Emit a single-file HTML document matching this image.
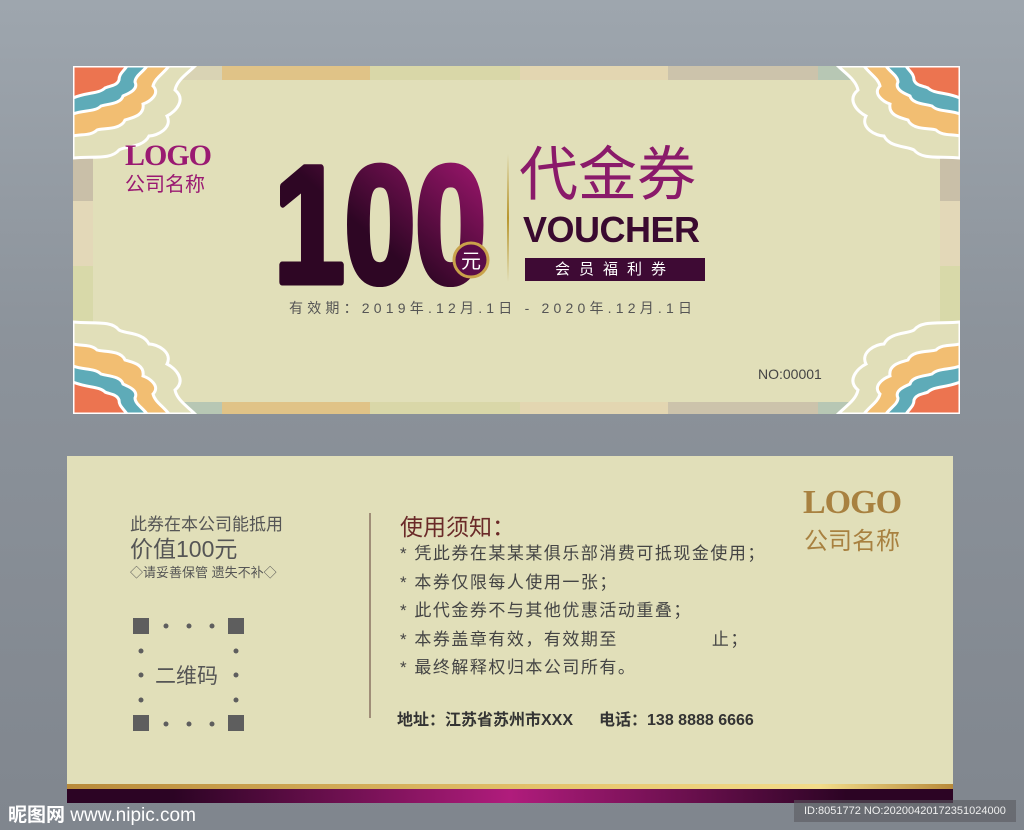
<!DOCTYPE html>
<html><head><meta charset="utf-8"><style>
*{margin:0;padding:0;box-sizing:border-box}
body{width:1024px;height:830px;overflow:hidden;position:relative;font-family:"Liberation Sans","Noto Sans CJK SC",sans-serif;
background:linear-gradient(180deg,#9ea6ae 0%,#8c939b 40%,#80868e 100%)}
.card{position:absolute;background:#e1dfb9}
.abs{position:absolute}
.cn{font-family:"Liberation Sans","Noto Sans CJK SC",sans-serif}
</style></head><body>
<svg width="0" height="0" style="position:absolute"><defs>
<g id="corner">
<path d="M0,0 H122 C114,8 104,14 102,24 C114,34 102,46 94,50 C100,62 84,70 76,70 C70,82 52,80 46,84 C38,94 20,90 0,92 Z" fill="#e1dfb9" stroke="#fff" stroke-width="3"/>
<path d="M0,0 H96 C90,8 82,12 80,20 C88,28 76,36 70,38 C72,50 58,52 52,54 C48,64 30,62 24,64 C18,70 8,68 0,70 Z" fill="#f2be72" stroke="#fff" stroke-width="3"/>
<path d="M0,0 H74 C70,6 62,10 62,16 C66,24 54,28 50,30 C48,38 34,38 28,40 C22,46 10,44 0,48 Z" fill="#5eabb8" stroke="#fff" stroke-width="3"/>
<path d="M0,0 H54 C50,6 46,8 46,14 C44,20 36,20 32,22 C26,28 14,26 0,32 Z" fill="#ec7450" stroke="#fff" stroke-width="3"/>
</g>
<linearGradient id="g100" x1="0" y1="1" x2="1" y2="0"><stop offset="0.45" stop-color="#2e0624"/><stop offset="1" stop-color="#b0197a"/></linearGradient>
</defs></svg>

<!-- top card -->
<div class="card" style="left:73px;top:66px;width:887px;height:348px">
 <div class="abs" style="left:0;top:0;width:887px;height:14px;background:linear-gradient(90deg,#d9d3b4 0,#d9d3b4 149px,#e0c387 149px,#e0c387 297px,#d9d7a8 297px,#d9d7a8 447px,#e3d6b1 447px,#e3d6b1 595px,#ccc3ab 595px,#ccc3ab 745px,#b7c7b4 745px)"></div>
 <div class="abs" style="left:0;bottom:0;width:887px;height:12px;background:linear-gradient(90deg,#b7c7b4 0,#b7c7b4 149px,#e0c387 149px,#e0c387 297px,#d9d7a8 297px,#d9d7a8 447px,#e3d6b1 447px,#e3d6b1 595px,#ccc3ab 595px,#ccc3ab 745px,#b7c7b4 745px)"></div>
 <div class="abs" style="left:0;top:0;width:20px;height:348px;background:linear-gradient(180deg,#d9d3b4 0,#c9bfa8 85px,#c9bfa8 135px,#e3d8b8 135px,#e3d8b8 200px,#d8d9a9 200px,#d8d9a9 265px,#b7c7b4 265px)"></div>
 <div class="abs" style="right:0;top:0;width:20px;height:348px;background:linear-gradient(180deg,#d9d3b4 0,#c9bfa8 85px,#c9bfa8 135px,#e3d8b8 135px,#e3d8b8 200px,#d8d9a9 200px,#d8d9a9 265px,#b7c7b4 265px)"></div>
 <div class="abs" style="left:20px;top:14px;width:847px;height:322px;background:#e1dfb9"></div>
 <svg class="abs" style="left:0;top:0" width="887" height="348">
  <use href="#corner"/>
  <use href="#corner" transform="translate(887,0) scale(-1,1)"/>
  <use href="#corner" transform="translate(0,348) scale(1,-1)"/>
  <use href="#corner" transform="translate(887,348) scale(-1,-1)"/>
 </svg>
 <div class="abs" style="left:52px;top:74px;font-family:'Liberation Serif',serif;font-weight:bold;font-size:30px;color:#9a1a72;letter-spacing:-1px;line-height:32px">LOGO</div>
 <div class="abs cn" style="left:52px;top:107px;font-size:20px;color:#9a1a72;line-height:24px">公司名称</div>
 <svg class="abs" style="left:198px;top:86px" width="230" height="135">
  <text x="3" y="130" font-family="Liberation Sans" font-weight="bold" font-size="166" fill="url(#g100)" stroke="url(#g100)" stroke-width="7" stroke-linejoin="round" textLength="212" lengthAdjust="spacingAndGlyphs">100</text>
  <circle cx="200" cy="108" r="17" fill="#5a0c48" stroke="#c9a24a" stroke-width="3"/>
  <text x="200" y="116" text-anchor="middle" font-family="Noto Sans CJK SC" font-size="20" fill="#fff">元</text>
 </svg>
 <div class="abs" style="left:434px;top:88px;width:2px;height:128px;background:linear-gradient(180deg,#e1dfb9,#b8962e,#e1dfb9)"></div>
 <div class="abs cn" style="left:446px;top:74px;font-size:59px;line-height:70px;color:#8a1a6a">代金券</div>
 <div class="abs" style="left:450px;top:144px;font-weight:bold;font-size:36px;line-height:40px;color:#3a0a30;letter-spacing:-0.5px">VOUCHER</div>
 <div class="abs cn" style="left:452px;top:192px;width:180px;height:23px;background:#3e0a34;color:#fff;font-size:15px;line-height:23px;text-align:center;letter-spacing:9px">会员福利券</div>
 <div class="abs cn" style="left:216px;top:233px;font-size:14px;color:#555;letter-spacing:4.2px;line-height:18px">有效期：2019年.12月.1日 - 2020年.12月.1日</div>
 <div class="abs" style="left:685px;top:300px;font-size:14px;color:#444">NO:00001</div>
</div>

<!-- bottom card -->
<div class="card" style="left:67px;top:456px;width:886px;height:347px">
 <div class="abs cn" style="left:63px;top:54px;font-size:17px;color:#555">此券在本公司能抵用</div>
 <div class="abs cn" style="left:63px;top:74px;font-size:23px;color:#555">价值100元</div>
 <div class="abs cn" style="left:63px;top:106px;font-size:13px;color:#555">◇请妥善保管 遗失不补◇</div>
 <svg class="abs" style="left:66px;top:162px" width="115" height="115" fill="#5e5e5e">
  <rect x="0" y="0" width="16" height="16"/><rect x="95" y="0" width="16" height="16"/>
  <rect x="0" y="97" width="16" height="16"/><rect x="95" y="97" width="16" height="16"/>
  <circle cx="33" cy="8" r="2.5"/><circle cx="56" cy="8" r="2.5"/><circle cx="79" cy="8" r="2.5"/>
  <circle cx="33" cy="106" r="2.5"/><circle cx="56" cy="106" r="2.5"/><circle cx="79" cy="106" r="2.5"/>
  <circle cx="8" cy="33" r="2.5"/><circle cx="8" cy="57" r="2.5"/><circle cx="8" cy="82" r="2.5"/>
  <circle cx="103" cy="33" r="2.5"/><circle cx="103" cy="57" r="2.5"/><circle cx="103" cy="82" r="2.5"/>
 </svg>
 <div class="abs cn" style="left:88px;top:204px;font-size:21px;color:#555">二维码</div>
 <div class="abs" style="left:302px;top:57px;width:2px;height:205px;background:#a08e78"></div>
 <div class="abs cn" style="left:333px;top:52px;font-size:23px;color:#6a2a28">使用须知：</div>
 <div class="abs cn" style="left:333px;top:84px;font-size:17px;color:#444;line-height:28.5px;letter-spacing:1.5px">
  <div>* 凭此券在某某某俱乐部消费可抵现金使用；</div>
  <div>* 本券仅限每人使用一张；</div>
  <div>* 此代金券不与其他优惠活动重叠；</div>
  <div>* 本券盖章有效，有效期至<span style="display:inline-block;width:94px"></span>止；</div>
  <div>* 最终解释权归本公司所有。</div>
 </div>
 <div class="abs cn" style="left:330px;top:250px;font-size:16px;color:#333;font-weight:bold">地址：江苏省苏州市XXX<span style="display:inline-block;width:26px"></span>电话：138 8888 6666</div>
 <div class="abs" style="left:736px;top:28px;font-family:'Liberation Serif',serif;font-weight:bold;font-size:34px;color:#a88140;letter-spacing:-1px">LOGO</div>
 <div class="abs cn" style="left:737px;top:65px;font-size:24px;color:#a88140">公司名称</div>
 <div class="abs" style="left:0;top:328px;width:886px;height:5px;background:linear-gradient(90deg,#b88a3a,#e8c870 60%,#f2dc8a 85%,#b88a3a)"></div>
 <div class="abs" style="left:0;top:333px;width:886px;height:14px;background:linear-gradient(90deg,#2c0424 0%,#2c0424 12%,#b01c7c 50%,#2c0424 88%,#2c0424 100%)"></div>
</div>

<div class="abs cn" style="left:8px;top:800px;font-size:19px;color:#fff;font-weight:bold">昵图网 <span style="font-weight:normal">www.nipic.com</span></div>
<div class="abs" style="left:794px;top:800px;width:222px;height:22px;background:rgba(90,90,95,.6);color:#eee;font-size:11px;line-height:22px;padding-left:10px">ID:8051772 NO:20200420172351024000</div>
</body></html>
